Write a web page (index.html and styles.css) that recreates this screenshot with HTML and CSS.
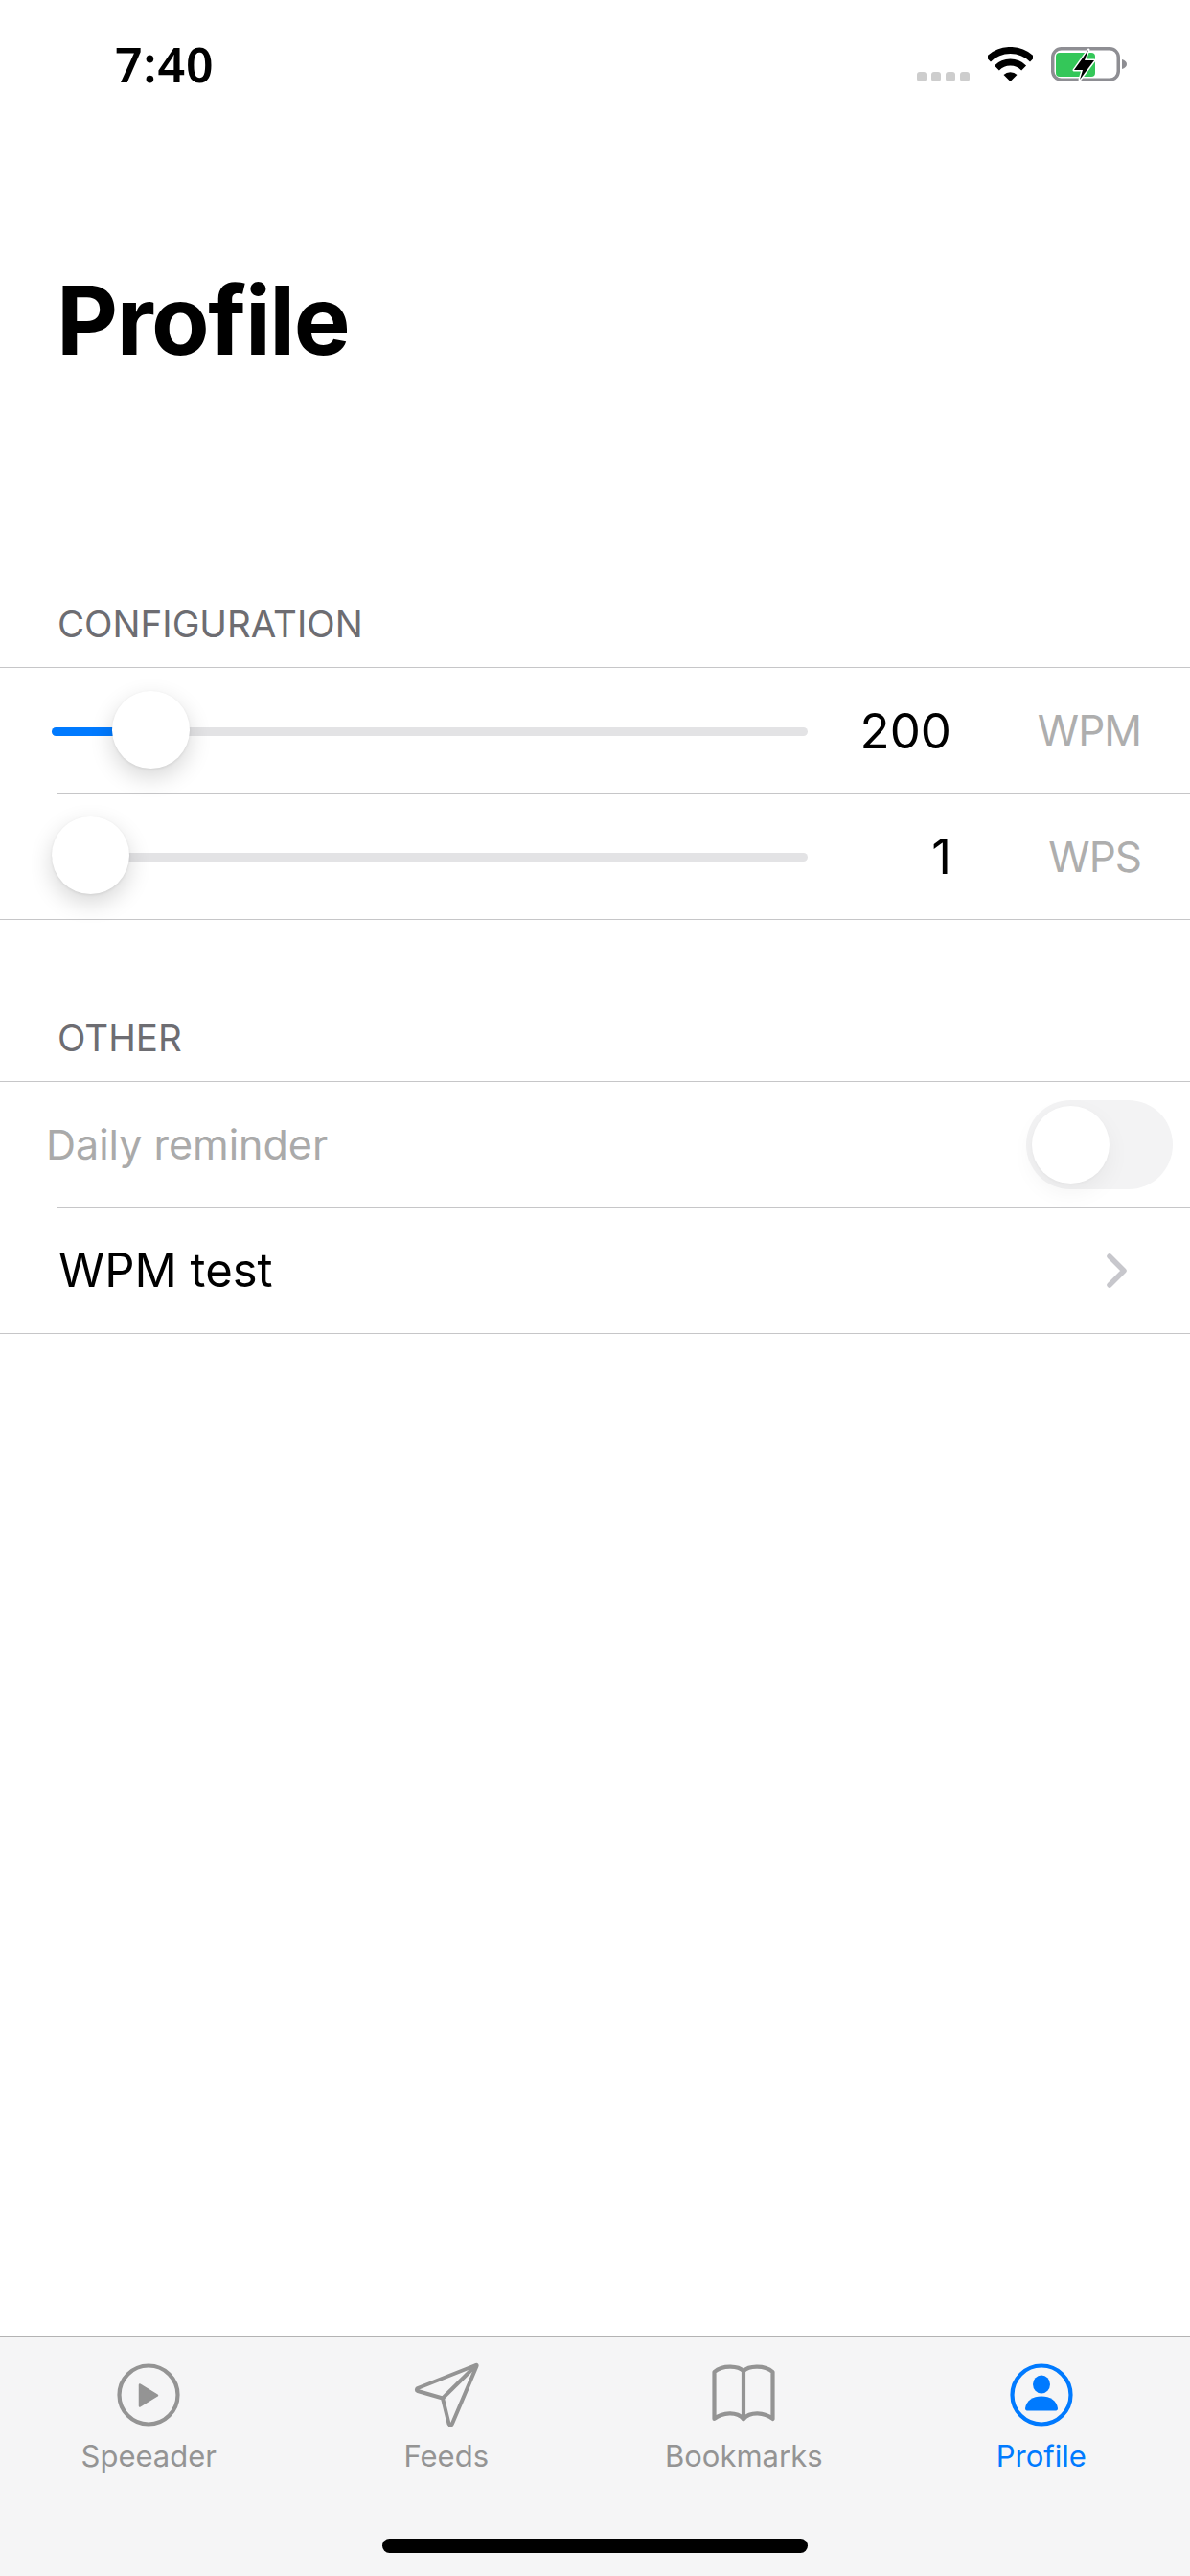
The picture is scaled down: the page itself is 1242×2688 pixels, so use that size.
FILE: index.html
```html
<!DOCTYPE html>
<html lang="en">
  <head>
    <meta charset="UTF-8" />
    <meta name="viewport" content="width=device-width, initial-scale=1.0" />
    <title>Profile</title>
    <link rel="stylesheet" href="styles.css">
  </head>
  <body>
    <div class="app">
      <header class="stat">
        <span class="stat_Time">7:40</span>
        <div class="stat_Icons">
          <div class="stat_Dots"><i></i><i></i><i></i><i></i></div>
          <svg class="stat_Wifi" width="47" height="36" viewBox="0 0 47 36" fill="none" stroke="#000" stroke-width="7">
            <path d="M.5 13A32.5 32.5 0 0 1 46.500 13" />
            <path d="M9.400 21.900A20 20 0 0 1 37.600 21.900" />
            <path d="M23.500 36L16.500 29A10 10 0 0 1 30.500 29Z" fill="#000" stroke="none" />
          </svg>
          <svg class="stat_Batt" width="80" height="36" viewBox="0 0 80 36" fill="none">
            <rect x="1.750" y="1.750" width="68.500" height="32.500" rx="9" stroke="#8e8e93" stroke-width="3.500" />
            <rect x="5" y="6" width="41" height="25" rx="4" fill="#34c759" />
            <path d="M74 13C77 14 79 15.500 79 18C79 20.500 77 22 74 23Z" fill="#8e8e93" />
            <path d="M39 3L24 24H33L30 34L45 14H35Z" fill="#000" stroke="#fff" stroke-width="3" stroke-linejoin="round" paint-order="stroke" />
          </svg>
        </div>
      </header>

      <h1 class="page_Title">Profile</h1>

      <h2 class="sec_Label sec_Label-first">CONFIGURATION</h2>
      <section class="sec_Group">
        <div class="row">
          <div class="sld">
            <div class="sld_Fill" style="width: 70px"></div>
            <div class="sld_Thumb" style="left: 63px"></div>
          </div>
          <span class="row_Value">200</span>
          <span class="row_Unit">WPM</span>
        </div>
        <div class="sec_Sep"></div>
        <div class="row">
          <div class="sld">
            <div class="sld_Thumb" style="left: 0"></div>
          </div>
          <span class="row_Value">1</span>
          <span class="row_Unit">WPS</span>
        </div>
      </section>

      <h2 class="sec_Label">OTHER</h2>
      <section class="sec_Group">
        <div class="row row-off">
          <span class="row_Name">Daily reminder</span>
          <div class="tgl"><div class="tgl_Thumb"></div></div>
        </div>
        <div class="sec_Sep"></div>
        <div class="row row-link">
          <span class="row_Link">WPM test</span>
          <svg class="row_Chev" width="21" height="36" viewBox="0 0 21 36" fill="none" stroke="#c7c7cc" stroke-width="5.500" stroke-linecap="round" stroke-linejoin="round">
            <path d="M3 3L18 18L3 33" />
          </svg>
        </div>
      </section>

      <nav class="tabs">
        <div class="tabs_Row">
          <a class="tabs_Item">
            <svg width="70" height="70" viewBox="0 0 70 70" fill="none" stroke="currentColor" stroke-width="4.200">
              <circle cx="35" cy="35" r="30.500" />
              <path d="M26 24.500L44 35.500L26 46.500Z" fill="currentColor" stroke-width="2.500" stroke-linejoin="round" />
            </svg>
            <span>Speeader</span>
          </a>
          <a class="tabs_Item">
            <svg width="70" height="70" viewBox="0 0 70 70" fill="none" stroke="currentColor" stroke-width="4" stroke-linejoin="round">
              <path d="M65.500 4L5 28C3.500 29 3.500 30.500 5 31L31 38.500L37.500 65C38.500 67 40 67 41 65L66.500 5C67 4 66.500 3.500 65.500 4Z" />
              <path d="M31 38.500L66 4" />
            </svg>
            <span>Feeds</span>
          </a>
          <a class="tabs_Item">
            <svg width="70" height="70" viewBox="0 0 70 70" fill="none" stroke="currentColor" stroke-width="4.200" stroke-linejoin="round" stroke-linecap="round">
              <path d="M35 10C30 5 14 3 4.500 11V60C13 53 28 52 35 60C42 52 57 53 65.500 60V11C56 3 40 5 35 10Z" />
              <path d="M35 10V60" />
            </svg>
            <span>Bookmarks</span>
          </a>
          <a class="tabs_Item tabs_Item-on">
            <svg width="70" height="70" viewBox="0 0 70 70" fill="currentColor">
              <circle cx="35" cy="35" r="30.500" fill="none" stroke="currentColor" stroke-width="4.200" />
              <ellipse cx="35" cy="24" rx="9" ry="9.500" />
              <path d="M18 49C19 41 26 36.500 35 36.500C44 36.500 51 41 52 49C52 50.500 51.500 51.500 50 51.500H20C18.500 51.500 18 50.500 18 49Z" />
            </svg>
            <span>Profile</span>
          </a>
        </div>
        <div class="tabs_Home"></div>
      </nav>
    </div>
  </body>
</html>
```

FILE: styles.css
```css
html {
  box-sizing: border-box;
}

*,
*:before,
*:after {
  box-sizing: inherit;
}

body,
h1,
h2 {
  margin: 0;
  font-weight: 400;
}

body {
  background-color: #fff;
  font-family: Inter, 'Liberation Sans', sans-serif;
}

.app {
  display: flex;
  flex-direction: column;
  width: 1242px;
  height: 2688px;
  overflow: hidden;
}

/* Status bar */

.stat {
  display: flex;
  justify-content: space-between;
  align-items: flex-start;
  height: 132px;
  padding: 49px 65px 0 120px;
}

.stat_Time {
  font-family: 'Noto Sans', sans-serif;
  font-size: 50px;
  line-height: 36px;
  letter-spacing: 1px;
  font-weight: 600;
  color: #000;
}

.stat_Icons {
  display: flex;
  align-items: flex-start;
}

.stat_Dots {
  display: flex;
  gap: 5px;
  margin: 26px 19px 0 0;
}

.stat_Dots i {
  width: 10px;
  height: 10px;
  border-radius: 3px;
  background-color: #cdcdcd;
}

.stat_Wifi {
  margin-right: 19px;
}

/* Title and section headers */

.page_Title {
  font-size: 99px;
  line-height: 124px;
  letter-spacing: -1.500px;
  font-weight: 700;
  color: #000;
  padding-left: 59px;
  margin-top: 140px;
}

.sec_Label {
  display: flex;
  align-items: flex-end;
  height: 168px;
  padding: 0 0 22px 60px;
  font-size: 38.500px;
  line-height: 46px;
  color: #6d6d72;
}

.sec_Label-first {
  height: 300px;
}

.sec_Group {
  border-top: 1px solid #c6c6c8;
  border-bottom: 1px solid #c6c6c8;
}

.sec_Sep {
  height: 1px;
  margin-left: 60px;
  background-color: #c6c6c8;
}

/* Rows */

.row {
  display: flex;
  align-items: center;
  height: 130.500px;
  padding-left: 54px;
}

.row_Value {
  width: 150px;
  text-align: right;
  font-size: 51px;
  color: #000;
}

.row_Unit {
  width: 198px;
  text-align: right;
  font-size: 44px;
  letter-spacing: -1px;
  color: #aeaeae;
}

.row-off {
  justify-content: space-between;
  padding: 0 18px 0 48px;
}

.row_Name {
  font-size: 43px;
  color: #aaa;
}

.row-link {
  justify-content: space-between;
  padding: 0 66px 0 61px;
}

.row_Link {
  font-size: 49px;
  color: #000;
}

/* Slider */

.sld {
  position: relative;
  width: 789px;
  height: 9px;
  margin-top: 2px;
  border-radius: 5px;
  background-color: #e3e3e5;
}

.sld_Fill {
  position: absolute;
  left: 0;
  top: 0;
  height: 100%;
  border-radius: 5px 0 0 5px;
  background-color: #007aff;
}

.sld_Thumb {
  position: absolute;
  top: -38px;
  width: 81px;
  height: 81px;
  border-radius: 50%;
  background-color: #fff;
  box-shadow: 0 9px 24px rgba(0, 0, 0, 0.16), 0 1px 3px rgba(0, 0, 0, 0.08);
}

/* Switch */

.tgl {
  width: 153px;
  height: 93px;
  padding: 6px;
  border-radius: 47px;
  background-color: #f3f3f4;
}

.tgl_Thumb {
  width: 81px;
  height: 81px;
  border-radius: 50%;
  background-color: #fff;
  box-shadow: 0 9px 24px rgba(0, 0, 0, 0.05), 0 1px 3px rgba(0, 0, 0, 0.03);
}

/* Tab bar */

.tabs {
  margin-top: auto;
  height: 250px;
  border-top: 1px solid #b3b3b3;
  background-color: #f5f5f6;
}

.tabs_Row {
  display: grid;
  grid-template-columns: repeat(4, 1fr);
  padding-top: 25px;
}

.tabs_Item {
  display: flex;
  flex-direction: column;
  align-items: center;
  font-size: 31px;
  line-height: 36px;
  color: #949494;
}

.tabs_Item span {
  margin-top: 11px;
}

.tabs_Item-on {
  color: #007aff;
}

.tabs_Home {
  width: 444px;
  height: 15px;
  margin: 68px auto 0;
  border-radius: 8px;
  background-color: #000;
}
```
